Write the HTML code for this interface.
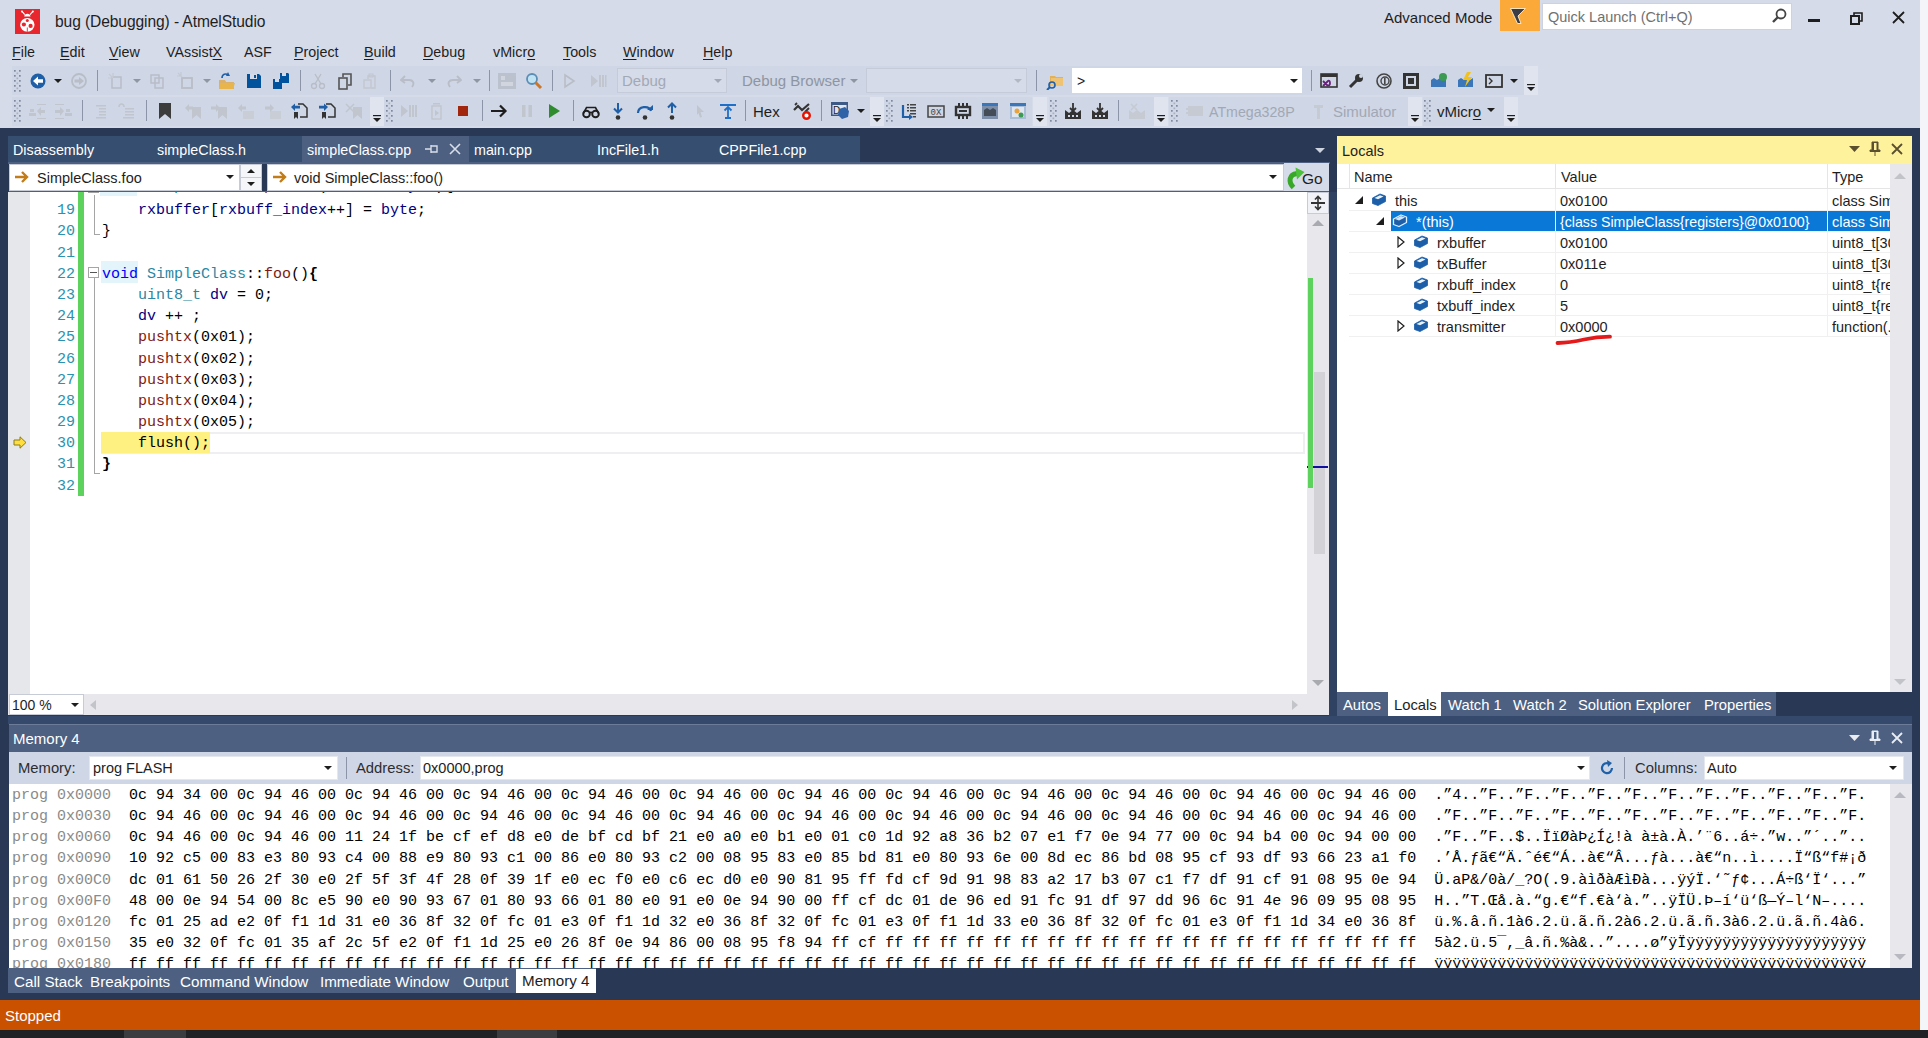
<!DOCTYPE html>
<html><head><meta charset="utf-8"><title>AtmelStudio</title>
<style>
html,body{margin:0;padding:0;width:1928px;height:1038px;overflow:hidden;background:#293955}
div{position:absolute;white-space:pre}
.S{font-family:"Liberation Sans",sans-serif}
.M{font-family:"Liberation Mono",monospace}
svg{position:absolute}
</style></head><body>
<div style="left:0px;top:0px;width:1920px;height:128px;background:#d6dbe9;"></div>
<div style="left:0px;top:128px;width:1920px;height:872px;background:#293955;"></div>
<div style="left:0px;top:1000px;width:1920px;height:30px;background:#ca5100;"></div>
<div style="left:0px;top:1030px;width:1928px;height:8px;background:#1f2125;"></div>
<div style="left:1920px;top:0px;width:8px;height:1030px;background:#f4f5f9;"></div>
<svg style="position:absolute;left:15px;top:9px;" width="25" height="25" viewBox="0 0 25 25"><rect width="25" height="25" fill="#e8262e"/><path d="M7 2.3 L9.8 5.6 M17.9 2.3 L15 5.6" stroke="#fff" stroke-width="1.2"/><circle cx="7" cy="2.4" r="1" fill="#fff"/><circle cx="17.9" cy="2.4" r="1" fill="#fff"/><path d="M9.2 7.6 A3.2 3.4 0 0 1 15.5 7.6 Z" fill="#fff"/><ellipse cx="12.3" cy="15.8" rx="7.2" ry="6.9" fill="#fff"/><circle cx="12.3" cy="11.6" r="1.5" fill="#e8262e"/><circle cx="8.9" cy="15.5" r="2.1" fill="#e8262e"/><circle cx="15.6" cy="16.9" r="2.1" fill="#e8262e"/><path d="M12.3 18.5 V22.8" stroke="#e8262e" stroke-width="0.9"/></svg>
<div class="S" style="left:55px;top:14.29px;font-size:15.6px;line-height:15.6px;color:#1e1e1e;letter-spacing:-0.1px">bug (Debugging) - AtmelStudio</div>
<div class="S" style="left:1384px;top:10.30px;font-size:15px;line-height:15px;color:#1e1e1e;">Advanced Mode</div>
<div style="left:1500px;top:0px;width:40px;height:31px;background:#fbaa3a;"></div>
<svg style="position:absolute;left:1508px;top:5px;" width="22" height="20" viewBox="0 0 22 20"><path d="M2.5 3.5 H17.4 L10 11 L13 18.5 H9.5 Z" fill="#3c3c46" stroke="#fff1cf" stroke-width="0.9" stroke-linejoin="round"/></svg>
<div style="left:1542px;top:3px;width:250px;height:27px;background:#fff;box-sizing:border-box;border:1px solid #cdd2dd"></div>
<div class="S" style="left:1548px;top:9.73px;font-size:14.5px;line-height:14.5px;color:#717171;">Quick Launch (Ctrl+Q)</div>
<svg style="position:absolute;left:1770px;top:7px;" width="18" height="18" viewBox="0 0 18 18"><circle cx="11" cy="7" r="4.5" fill="none" stroke="#444" stroke-width="1.8"/><line x1="8" y1="10" x2="3" y2="15" stroke="#444" stroke-width="2.4"/></svg>
<div style="left:1808px;top:19px;width:12px;height:3px;background:#1e1e1e;"></div>
<svg style="position:absolute;left:1849px;top:10px;" width="16" height="16" viewBox="0 0 16 16"><rect x="2" y="6" width="8" height="8" fill="none" stroke="#1e1e1e" stroke-width="2"/><path d="M5 6 V3 H13 V11 H10" fill="none" stroke="#1e1e1e" stroke-width="1.6"/></svg>
<svg style="position:absolute;left:1891px;top:10px;" width="15" height="15" viewBox="0 0 15 15"><path d="M2 2 L13 13 M13 2 L2 13" stroke="#1e1e1e" stroke-width="1.8"/></svg>
<div class="S" style="left:12px;top:44.90px;font-size:14.3px;line-height:14.3px;color:#1e1e1e;"><span style="text-decoration:underline;text-underline-offset:2px;text-decoration-thickness:1px">F</span>ile</div>
<div class="S" style="left:60px;top:44.90px;font-size:14.3px;line-height:14.3px;color:#1e1e1e;"><span style="text-decoration:underline;text-underline-offset:2px;text-decoration-thickness:1px">E</span>dit</div>
<div class="S" style="left:109px;top:44.90px;font-size:14.3px;line-height:14.3px;color:#1e1e1e;"><span style="text-decoration:underline;text-underline-offset:2px;text-decoration-thickness:1px">V</span>iew</div>
<div class="S" style="left:166px;top:44.90px;font-size:14.3px;line-height:14.3px;color:#1e1e1e;">VAssist<span style="text-decoration:underline;text-underline-offset:2px;text-decoration-thickness:1px">X</span></div>
<div class="S" style="left:244px;top:44.90px;font-size:14.3px;line-height:14.3px;color:#1e1e1e;">ASF</div>
<div class="S" style="left:294px;top:44.90px;font-size:14.3px;line-height:14.3px;color:#1e1e1e;"><span style="text-decoration:underline;text-underline-offset:2px;text-decoration-thickness:1px">P</span>roject</div>
<div class="S" style="left:364px;top:44.90px;font-size:14.3px;line-height:14.3px;color:#1e1e1e;"><span style="text-decoration:underline;text-underline-offset:2px;text-decoration-thickness:1px">B</span>uild</div>
<div class="S" style="left:423px;top:44.90px;font-size:14.3px;line-height:14.3px;color:#1e1e1e;"><span style="text-decoration:underline;text-underline-offset:2px;text-decoration-thickness:1px">D</span>ebug</div>
<div class="S" style="left:493px;top:44.90px;font-size:14.3px;line-height:14.3px;color:#1e1e1e;">vMicr<span style="text-decoration:underline;text-underline-offset:2px;text-decoration-thickness:1px">o</span></div>
<div class="S" style="left:563px;top:44.90px;font-size:14.3px;line-height:14.3px;color:#1e1e1e;"><span style="text-decoration:underline;text-underline-offset:2px;text-decoration-thickness:1px">T</span>ools</div>
<div class="S" style="left:623px;top:44.90px;font-size:14.3px;line-height:14.3px;color:#1e1e1e;"><span style="text-decoration:underline;text-underline-offset:2px;text-decoration-thickness:1px">W</span>indow</div>
<div class="S" style="left:703px;top:44.90px;font-size:14.3px;line-height:14.3px;color:#1e1e1e;"><span style="text-decoration:underline;text-underline-offset:2px;text-decoration-thickness:1px">H</span>elp</div>
<div style="left:12px;top:66px;width:1512px;height:29px;background:#cfd6e5;"></div>
<div style="left:1524px;top:66px;width:14px;height:29px;background:#dfe4ee;"></div>
<div style="left:12px;top:97px;width:358px;height:29px;background:#cfd6e5;"></div>
<div style="left:1153px;top:97px;width:1px;height:29px;background:#cfd6e5;"></div>
<div style="left:12px;top:97px;width:358px;height:29px;background:#cfd6e5;"></div>
<div style="left:384px;top:97px;width:486px;height:29px;background:#cfd6e5;"></div>
<div style="left:884px;top:97px;width:148px;height:29px;background:#cfd6e5;"></div>
<div style="left:1049px;top:97px;width:105px;height:29px;background:#cfd6e5;"></div>
<div style="left:1169px;top:97px;width:239px;height:29px;background:#cfd6e5;"></div>
<div style="left:1423px;top:97px;width:81px;height:29px;background:#cfd6e5;"></div>
<div style="left:370px;top:97px;width:14px;height:29px;background:#dfe4ee;"></div>
<svg style="position:absolute;left:372px;top:113px;" width="10" height="10" viewBox="0 0 10 10"><rect x="1" y="2" width="8" height="1.2" fill="#1e1e1e"/><path d="M1 5 H9 L5 9 Z" fill="#1e1e1e"/></svg>
<div style="left:870px;top:97px;width:14px;height:29px;background:#dfe4ee;"></div>
<svg style="position:absolute;left:872px;top:113px;" width="10" height="10" viewBox="0 0 10 10"><rect x="1" y="2" width="8" height="1.2" fill="#1e1e1e"/><path d="M1 5 H9 L5 9 Z" fill="#1e1e1e"/></svg>
<div style="left:1033px;top:97px;width:14px;height:29px;background:#dfe4ee;"></div>
<svg style="position:absolute;left:1035px;top:113px;" width="10" height="10" viewBox="0 0 10 10"><rect x="1" y="2" width="8" height="1.2" fill="#1e1e1e"/><path d="M1 5 H9 L5 9 Z" fill="#1e1e1e"/></svg>
<div style="left:1154px;top:97px;width:14px;height:29px;background:#dfe4ee;"></div>
<svg style="position:absolute;left:1156px;top:113px;" width="10" height="10" viewBox="0 0 10 10"><rect x="1" y="2" width="8" height="1.2" fill="#1e1e1e"/><path d="M1 5 H9 L5 9 Z" fill="#1e1e1e"/></svg>
<div style="left:1408px;top:97px;width:14px;height:29px;background:#dfe4ee;"></div>
<svg style="position:absolute;left:1410px;top:113px;" width="10" height="10" viewBox="0 0 10 10"><rect x="1" y="2" width="8" height="1.2" fill="#1e1e1e"/><path d="M1 5 H9 L5 9 Z" fill="#1e1e1e"/></svg>
<div style="left:1504px;top:97px;width:14px;height:29px;background:#dfe4ee;"></div>
<svg style="position:absolute;left:1506px;top:113px;" width="10" height="10" viewBox="0 0 10 10"><rect x="1" y="2" width="8" height="1.2" fill="#1e1e1e"/><path d="M1 5 H9 L5 9 Z" fill="#1e1e1e"/></svg>
<div style="left:1524px;top:66px;width:14px;height:29px;background:#dfe4ee;"></div>
<svg style="position:absolute;left:1526px;top:82px;" width="10" height="10" viewBox="0 0 10 10"><rect x="1" y="2" width="8" height="1.2" fill="#1e1e1e"/><path d="M1 5 H9 L5 9 Z" fill="#1e1e1e"/></svg>
<svg style="position:absolute;left:14px;top:70px;" width="7" height="22" viewBox="0 0 7 22"><rect x="0" y="0.0" width="1.7" height="1.7" fill="#7f899d"/><rect x="5" y="0.0" width="1.7" height="1.7" fill="#7f899d"/><rect x="2.5" y="2.5" width="1.7" height="1.7" fill="#a9b1c0"/><rect x="0" y="5.0" width="1.7" height="1.7" fill="#7f899d"/><rect x="5" y="5.0" width="1.7" height="1.7" fill="#7f899d"/><rect x="2.5" y="7.5" width="1.7" height="1.7" fill="#a9b1c0"/><rect x="0" y="10.0" width="1.7" height="1.7" fill="#7f899d"/><rect x="5" y="10.0" width="1.7" height="1.7" fill="#7f899d"/><rect x="2.5" y="12.5" width="1.7" height="1.7" fill="#a9b1c0"/><rect x="0" y="15.0" width="1.7" height="1.7" fill="#7f899d"/><rect x="5" y="15.0" width="1.7" height="1.7" fill="#7f899d"/><rect x="2.5" y="17.5" width="1.7" height="1.7" fill="#a9b1c0"/><rect x="0" y="20.0" width="1.7" height="1.7" fill="#7f899d"/><rect x="5" y="20.0" width="1.7" height="1.7" fill="#7f899d"/></svg>
<svg style="position:absolute;left:14px;top:100px;" width="7" height="22" viewBox="0 0 7 22"><rect x="0" y="0.0" width="1.7" height="1.7" fill="#7f899d"/><rect x="5" y="0.0" width="1.7" height="1.7" fill="#7f899d"/><rect x="2.5" y="2.5" width="1.7" height="1.7" fill="#a9b1c0"/><rect x="0" y="5.0" width="1.7" height="1.7" fill="#7f899d"/><rect x="5" y="5.0" width="1.7" height="1.7" fill="#7f899d"/><rect x="2.5" y="7.5" width="1.7" height="1.7" fill="#a9b1c0"/><rect x="0" y="10.0" width="1.7" height="1.7" fill="#7f899d"/><rect x="5" y="10.0" width="1.7" height="1.7" fill="#7f899d"/><rect x="2.5" y="12.5" width="1.7" height="1.7" fill="#a9b1c0"/><rect x="0" y="15.0" width="1.7" height="1.7" fill="#7f899d"/><rect x="5" y="15.0" width="1.7" height="1.7" fill="#7f899d"/><rect x="2.5" y="17.5" width="1.7" height="1.7" fill="#a9b1c0"/><rect x="0" y="20.0" width="1.7" height="1.7" fill="#7f899d"/><rect x="5" y="20.0" width="1.7" height="1.7" fill="#7f899d"/></svg>
<svg style="position:absolute;left:29px;top:72px;" width="18" height="18" viewBox="0 0 18 18"><circle cx="9" cy="9" r="7.5" fill="#1f5fa8"/><path d="M4 9 L9 4.5 V7.3 H14 V10.7 H9 V13.5 Z" fill="#fff"/></svg>
<svg style="position:absolute;left:54px;top:79px;" width="8" height="5" viewBox="0 0 8 5"><path d="M0 0 H8 L4 4 Z" fill="#1e1e1e"/></svg>
<svg style="position:absolute;left:70px;top:72px;" width="18" height="18" viewBox="0 0 18 18"><circle cx="9" cy="9" r="7" fill="none" stroke="#b8bdc7" stroke-width="1.8"/><path d="M14 9 L9 5 V7.5 H4.5 V10.5 H9 V13 Z" fill="#b8bdc7"/></svg>
<div style="left:97px;top:70px;width:1px;height:21px;background:#8c95a8;"></div>
<svg style="position:absolute;left:107px;top:72px;" width="18" height="18" viewBox="0 0 18 18"><rect x="5" y="5" width="9" height="11" fill="none" stroke="#b8bdc7" stroke-width="1.5"/><path d="M2 2 L6 6 M6 1 V5 M1 6 H5" stroke="#c5cad3" stroke-width="1.2"/></svg>
<svg style="position:absolute;left:133px;top:79px;" width="8" height="5" viewBox="0 0 8 5"><path d="M0 0 H8 L4 4 Z" fill="#8f96a4"/></svg>
<svg style="position:absolute;left:148px;top:72px;" width="18" height="18" viewBox="0 0 18 18"><rect x="3" y="3" width="8" height="8" fill="none" stroke="#b8bdc7" stroke-width="1.5"/><rect x="7" y="6" width="8" height="10" fill="none" stroke="#b8bdc7" stroke-width="1.5"/></svg>
<svg style="position:absolute;left:177px;top:72px;" width="18" height="18" viewBox="0 0 18 18"><rect x="5" y="6" width="10" height="10" fill="none" stroke="#b8bdc7" stroke-width="1.8"/><path d="M1 1 L5 5 M4 0 V4 M0 4 H4" stroke="#c5cad3" stroke-width="1.2"/></svg>
<svg style="position:absolute;left:203px;top:79px;" width="8" height="5" viewBox="0 0 8 5"><path d="M0 0 H8 L4 4 Z" fill="#8f96a4"/></svg>
<svg style="position:absolute;left:218px;top:72px;" width="18" height="18" viewBox="0 0 18 18"><path d="M1 8 H7 L8 10 H16 V17 H1 Z" fill="#dcb067"/><path d="M2 11 H17 L15 17 H1 Z" fill="#e8b54d"/><path d="M4 6 C4 2, 8 1, 10 3" fill="none" stroke="#1f5fa8" stroke-width="1.6"/><path d="M10 0 L12 4 L8 4 Z" fill="#1f5fa8"/></svg>
<svg style="position:absolute;left:245px;top:72px;" width="18" height="18" viewBox="0 0 18 18"><path d="M2 2 H14 L16 4 V16 H2 Z" fill="#00539c"/><rect x="5" y="2" width="7" height="5" fill="#d6dbe9"/><rect x="9" y="3" width="2" height="3" fill="#00539c"/><rect x="5" y="10" width="8" height="6" fill="#00539c"/></svg>
<svg style="position:absolute;left:272px;top:72px;" width="18" height="18" viewBox="0 0 18 18"><path d="M1 7 H9 L10 8 V17 H1 Z" fill="#00539c"/><rect x="3" y="7" width="4" height="3" fill="#d6dbe9"/><path d="M8 1 H16 L17 2 V11 H8 Z" fill="#00539c"/><rect x="10" y="1" width="4" height="3" fill="#d6dbe9"/></svg>
<div style="left:300px;top:70px;width:1px;height:21px;background:#8c95a8;"></div>
<svg style="position:absolute;left:309px;top:72px;" width="18" height="18" viewBox="0 0 18 18"><circle cx="5" cy="14" r="2.5" fill="none" stroke="#b8bdc7" stroke-width="1.3"/><circle cx="13" cy="14" r="2.5" fill="none" stroke="#b8bdc7" stroke-width="1.3"/><path d="M6 12 L12 2 M12 12 L6 2" stroke="#b8bdc7" stroke-width="1.3"/></svg>
<svg style="position:absolute;left:336px;top:72px;" width="18" height="18" viewBox="0 0 18 18"><rect x="3" y="6" width="8" height="11" fill="none" stroke="#555" stroke-width="1.6"/><path d="M7 5 V2 H15 V13 H12" fill="none" stroke="#555" stroke-width="1.6"/></svg>
<svg style="position:absolute;left:362px;top:72px;" width="18" height="18" viewBox="0 0 18 18"><rect x="2" y="8" width="7" height="8" fill="none" stroke="#c2c7d0" stroke-width="1.4"/><path d="M6 7 V4 H13 V16 H9" fill="none" stroke="#c2c7d0" stroke-width="1.4"/><rect x="7" y="2" width="4" height="3" fill="none" stroke="#c2c7d0"/></svg>
<div style="left:390px;top:70px;width:1px;height:21px;background:#8c95a8;"></div>
<svg style="position:absolute;left:400px;top:72px;" width="18" height="18" viewBox="0 0 18 18"><path d="M5 4 L1 8 L5 11" fill="none" stroke="#b8bdc7" stroke-width="1.8"/><path d="M2 8 H9 C13 8 15 11 12 15" fill="none" stroke="#b8bdc7" stroke-width="1.8"/></svg>
<svg style="position:absolute;left:428px;top:79px;" width="8" height="5" viewBox="0 0 8 5"><path d="M0 0 H8 L4 4 Z" fill="#8f96a4"/></svg>
<svg style="position:absolute;left:444px;top:72px;" width="18" height="18" viewBox="0 0 18 18"><path d="M13 4 L17 8 L13 11" fill="none" stroke="#b8bdc7" stroke-width="1.8"/><path d="M16 8 H9 C5 8 3 11 6 15" fill="none" stroke="#b8bdc7" stroke-width="1.8"/></svg>
<svg style="position:absolute;left:473px;top:79px;" width="8" height="5" viewBox="0 0 8 5"><path d="M0 0 H8 L4 4 Z" fill="#8f96a4"/></svg>
<div style="left:489px;top:70px;width:1px;height:21px;background:#8c95a8;"></div>
<svg style="position:absolute;left:498px;top:72px;" width="18" height="18" viewBox="0 0 18 18"><rect x="0" y="1" width="18" height="16" fill="#bcc2cd"/><rect x="3" y="4" width="4" height="4" fill="#d0d5de"/><rect x="3" y="10" width="12" height="4" fill="#d0d5de"/></svg>
<svg style="position:absolute;left:525px;top:72px;" width="18" height="18" viewBox="0 0 18 18"><circle cx="7" cy="7" r="5" fill="#bfe3f2" stroke="#5b8db5" stroke-width="1.8"/><path d="M10.5 10.5 L16 16" stroke="#c9772c" stroke-width="3"/></svg>
<div style="left:552px;top:70px;width:1px;height:21px;background:#8c95a8;"></div>
<svg style="position:absolute;left:560px;top:72px;" width="18" height="18" viewBox="0 0 18 18"><path d="M5 3 L14 9 L5 15 Z" fill="none" stroke="#b8bdc7" stroke-width="1.6"/></svg>
<svg style="position:absolute;left:589px;top:72px;" width="18" height="18" viewBox="0 0 18 18"><path d="M2 3 L9 9 L2 15 Z" fill="#c0c5ce"/><rect x="10" y="3" width="2" height="12" fill="#c0c5ce"/><rect x="13" y="3" width="2" height="12" fill="#c0c5ce"/><rect x="16" y="3" width="1.5" height="12" fill="#c0c5ce"/></svg>
<div style="left:617px;top:68px;width:110px;height:25px;background:#d6dbe9;box-sizing:border-box;border:1px solid #c5cbd8"></div>
<div class="S" style="left:622px;top:73.30px;font-size:15px;line-height:15px;color:#a2a9b6;">Debug</div>
<svg style="position:absolute;left:714px;top:79px;" width="8" height="5" viewBox="0 0 8 5"><path d="M0 0 H8 L4 4 Z" fill="#a2a9b6"/></svg>
<div class="S" style="left:742px;top:73.30px;font-size:15px;line-height:15px;color:#8d95a3;">Debug Browser</div>
<svg style="position:absolute;left:850px;top:79px;" width="8" height="5" viewBox="0 0 8 5"><path d="M0 0 H8 L4 4 Z" fill="#8d95a3"/></svg>
<div style="left:866px;top:68px;width:161px;height:25px;background:#d6dbe9;box-sizing:border-box;border:1px solid #c5cbd8"></div>
<svg style="position:absolute;left:1014px;top:79px;" width="8" height="5" viewBox="0 0 8 5"><path d="M0 0 H8 L4 4 Z" fill="#b3b9c4"/></svg>
<div style="left:1036px;top:70px;width:1px;height:21px;background:#8c95a8;"></div>
<svg style="position:absolute;left:1046px;top:72px;" width="18" height="18" viewBox="0 0 18 18"><path d="M4 4 H9 L10 5 H17 V14 H4 Z" fill="#e1b15c"/><rect x="5" y="6" width="12" height="8" fill="#eec373"/><circle cx="6" cy="13" r="3" fill="none" stroke="#1f5fa8" stroke-width="1.6"/><path d="M4 15 L1 18" stroke="#1f5fa8" stroke-width="2"/></svg>
<div style="left:1072px;top:68px;width:230px;height:25px;background:#ffffff;"></div>
<div class="S" style="left:1077px;top:74.15px;font-size:14px;line-height:14px;color:#1e1e1e;">&gt;</div>
<svg style="position:absolute;left:1290px;top:79px;" width="8" height="5" viewBox="0 0 8 5"><path d="M0 0 H8 L4 4 Z" fill="#1e1e1e"/></svg>
<div style="left:1311px;top:70px;width:1px;height:21px;background:#8c95a8;"></div>
<svg style="position:absolute;left:1320px;top:72px;" width="18" height="18" viewBox="0 0 18 18"><rect x="1" y="2" width="16" height="13" fill="none" stroke="#333" stroke-width="1.6"/><rect x="1" y="2" width="16" height="3" fill="#333"/><path d="M3 9 L8 14 M3 14 L8 9 C9 8 10 9 10 11 C10 13 9 14 8 13" fill="none" stroke="#68217a" stroke-width="1.8"/></svg>
<svg style="position:absolute;left:1347px;top:72px;" width="18" height="18" viewBox="0 0 18 18"><path d="M3 15 L10 8" stroke="#333" stroke-width="3"/><circle cx="12" cy="6" r="4" fill="#333"/><circle cx="14" cy="4" r="2" fill="#cfd6e5"/></svg>
<svg style="position:absolute;left:1375px;top:72px;" width="18" height="18" viewBox="0 0 18 18"><circle cx="9" cy="9" r="7" fill="none" stroke="#444" stroke-width="1.6"/><circle cx="10" cy="9" r="4" fill="none" stroke="#444" stroke-width="1.4"/><rect x="9" y="6" width="1.6" height="6" fill="#444"/></svg>
<svg style="position:absolute;left:1402px;top:72px;" width="18" height="18" viewBox="0 0 18 18"><rect x="1" y="1" width="16" height="16" fill="#333"/><rect x="4" y="4" width="10" height="10" fill="#cfd6e5"/><rect x="6" y="6" width="6" height="6" fill="#333"/></svg>
<svg style="position:absolute;left:1430px;top:72px;" width="18" height="18" viewBox="0 0 18 18"><path d="M1 8 L4 6 L7 8 L10 6 L13 8 L16 6 V15 H1 Z" fill="#3a76b8"/><circle cx="13" cy="5" r="4" fill="#3c9a52"/></svg>
<svg style="position:absolute;left:1457px;top:72px;" width="18" height="18" viewBox="0 0 18 18"><path d="M1 8 L4 6 L7 8 L10 6 L13 8 L16 6 V15 H1 Z" fill="#3a76b8"/><path d="M10 0 L6 8 H10 L8 15 L15 5 H11 L14 0 Z" fill="#f2c21a"/></svg>
<svg style="position:absolute;left:1485px;top:72px;" width="18" height="18" viewBox="0 0 18 18"><rect x="1" y="3" width="16" height="12" fill="none" stroke="#333" stroke-width="1.8"/><path d="M4 6 L7 9 L4 12" fill="none" stroke="#333" stroke-width="1.4"/></svg>
<svg style="position:absolute;left:1510px;top:79px;" width="8" height="5" viewBox="0 0 8 5"><path d="M0 0 H8 L4 4 Z" fill="#1e1e1e"/></svg>
<svg style="position:absolute;left:29px;top:102px;" width="18" height="18" viewBox="0 0 18 18"><rect x="1" y="7" width="4" height="3" fill="#c0c5ce"/><rect x="0" y="11" width="7" height="3" fill="#c0c5ce"/><path d="M8 9 L12 5 V8 H16 V11 H12 V14 Z" fill="#c0c5ce"/><rect x="8" y="2" width="9" height="1" fill="#c0c5ce"/><rect x="8" y="16" width="9" height="1" fill="#c0c5ce"/></svg>
<svg style="position:absolute;left:54px;top:102px;" width="18" height="18" viewBox="0 0 18 18"><rect x="12" y="7" width="4" height="3" fill="#c0c5ce"/><rect x="11" y="11" width="7" height="3" fill="#c0c5ce"/><path d="M10 9 L6 5 V8 H1 V11 H6 V14 Z" fill="#c0c5ce"/><rect x="1" y="2" width="9" height="1" fill="#c0c5ce"/><rect x="1" y="16" width="9" height="1" fill="#c0c5ce"/></svg>
<div style="left:82px;top:100px;width:1px;height:21px;background:#8c95a8;"></div>
<svg style="position:absolute;left:92px;top:102px;" width="18" height="18" viewBox="0 0 18 18"><rect x="4" y="3" width="10" height="1.5" fill="#c0c5ce"/><rect x="7" y="6" width="7" height="1.5" fill="#c0c5ce"/><rect x="7" y="9" width="7" height="1.5" fill="#c0c5ce"/><rect x="7" y="12" width="7" height="1.5" fill="#c0c5ce"/><rect x="4" y="15" width="10" height="1.5" fill="#c0c5ce"/></svg>
<svg style="position:absolute;left:118px;top:102px;" width="18" height="18" viewBox="0 0 18 18"><path d="M1 5 C1 1 6 1 6 5" fill="none" stroke="#c0c5ce" stroke-width="1.5"/><rect x="7" y="6" width="9" height="1.5" fill="#c0c5ce"/><rect x="7" y="9" width="9" height="1.5" fill="#c0c5ce"/><rect x="7" y="12" width="9" height="1.5" fill="#c0c5ce"/><rect x="5" y="15" width="11" height="1.5" fill="#c0c5ce"/></svg>
<div style="left:146px;top:100px;width:1px;height:21px;background:#8c95a8;"></div>
<svg style="position:absolute;left:156px;top:102px;" width="18" height="18" viewBox="0 0 18 18"><path d="M3 1 H15 V17 L9 12 L3 17 Z" fill="#3c3c3c"/></svg>
<svg style="position:absolute;left:184px;top:102px;" width="18" height="18" viewBox="0 0 18 18"><path d="M8 5 H17 V17 L12.5 13 L8 17 Z" fill="#c0c5ce"/><path d="M1 6 L5 2 V4.5 H9 V7.5 H5 V10 Z" fill="#c0c5ce"/></svg>
<svg style="position:absolute;left:210px;top:102px;" width="18" height="18" viewBox="0 0 18 18"><path d="M8 5 H17 V17 L12.5 13 L8 17 Z" fill="#c0c5ce"/><path d="M10 6 L6 2 V4.5 H1 V7.5 H6 V10 Z" fill="#c0c5ce"/></svg>
<svg style="position:absolute;left:237px;top:102px;" width="18" height="18" viewBox="0 0 18 18"><rect x="6" y="9" width="11" height="8" fill="#c8cdd6"/><path d="M1 6 L5 2 V4.5 H9 V7.5 H5 V10 Z" fill="#c0c5ce"/></svg>
<svg style="position:absolute;left:264px;top:102px;" width="18" height="18" viewBox="0 0 18 18"><rect x="6" y="9" width="11" height="8" fill="#c8cdd6"/><path d="M10 6 L6 2 V4.5 H1 V7.5 H6 V10 Z" fill="#c0c5ce"/></svg>
<svg style="position:absolute;left:290px;top:102px;" width="18" height="18" viewBox="0 0 18 18"><path d="M8 2 H13 L17 6 V15 H10" fill="none" stroke="#333" stroke-width="1.5"/><path d="M4 10 H8 V17 L6 15 L4 17 Z" fill="#333"/><path d="M1 5 L5 1.5 V3.8 H10 V6.5 H5 V9 Z" fill="#1f5fa8"/></svg>
<svg style="position:absolute;left:318px;top:102px;" width="18" height="18" viewBox="0 0 18 18"><path d="M8 2 H13 L17 6 V15 H10" fill="none" stroke="#333" stroke-width="1.5"/><path d="M4 10 H8 V17 L6 15 L4 17 Z" fill="#333"/><path d="M10 5 L6 1.5 V3.8 H1 V6.5 H6 V9 Z" fill="#1f5fa8"/></svg>
<svg style="position:absolute;left:345px;top:102px;" width="18" height="18" viewBox="0 0 18 18"><path d="M8 5 H17 V17 L12.5 13 L8 17 Z" fill="#c0c5ce"/><path d="M1 2 L9 10 M9 2 L1 10" stroke="#c0c5ce" stroke-width="1.5"/></svg>
<svg style="position:absolute;left:386px;top:100px;" width="7" height="22" viewBox="0 0 7 22"><rect x="0" y="0.0" width="1.7" height="1.7" fill="#7f899d"/><rect x="5" y="0.0" width="1.7" height="1.7" fill="#7f899d"/><rect x="2.5" y="2.5" width="1.7" height="1.7" fill="#a9b1c0"/><rect x="0" y="5.0" width="1.7" height="1.7" fill="#7f899d"/><rect x="5" y="5.0" width="1.7" height="1.7" fill="#7f899d"/><rect x="2.5" y="7.5" width="1.7" height="1.7" fill="#a9b1c0"/><rect x="0" y="10.0" width="1.7" height="1.7" fill="#7f899d"/><rect x="5" y="10.0" width="1.7" height="1.7" fill="#7f899d"/><rect x="2.5" y="12.5" width="1.7" height="1.7" fill="#a9b1c0"/><rect x="0" y="15.0" width="1.7" height="1.7" fill="#7f899d"/><rect x="5" y="15.0" width="1.7" height="1.7" fill="#7f899d"/><rect x="2.5" y="17.5" width="1.7" height="1.7" fill="#a9b1c0"/><rect x="0" y="20.0" width="1.7" height="1.7" fill="#7f899d"/><rect x="5" y="20.0" width="1.7" height="1.7" fill="#7f899d"/></svg>
<svg style="position:absolute;left:400px;top:102px;" width="18" height="18" viewBox="0 0 18 18"><path d="M1 3 L8 9 L1 15 Z" fill="#c0c5ce"/><rect x="9" y="3" width="2" height="12" fill="#c0c5ce"/><rect x="12" y="3" width="2" height="12" fill="#c0c5ce"/><rect x="15" y="3" width="2" height="12" fill="#c0c5ce"/></svg>
<svg style="position:absolute;left:427px;top:102px;" width="18" height="18" viewBox="0 0 18 18"><rect x="5" y="4" width="9" height="13" fill="none" stroke="#c0c5ce" stroke-width="1.4"/><rect x="6" y="1" width="7" height="1.5" fill="#c0c5ce"/><path d="M8 8 L12 11 L8 14 Z" fill="#c0c5ce"/></svg>
<svg style="position:absolute;left:454px;top:102px;" width="18" height="18" viewBox="0 0 18 18"><rect x="4" y="4" width="10" height="10" fill="#a1260d"/></svg>
<div style="left:482px;top:100px;width:1px;height:21px;background:#8c95a8;"></div>
<svg style="position:absolute;left:490px;top:102px;" width="18" height="18" viewBox="0 0 18 18"><path d="M1 9 H15 M10 3.5 L15.5 9 L10 14.5" fill="none" stroke="#1e1e1e" stroke-width="2.2"/></svg>
<svg style="position:absolute;left:518px;top:102px;" width="18" height="18" viewBox="0 0 18 18"><rect x="4" y="3" width="3.5" height="12" fill="#c0c5ce"/><rect x="10.5" y="3" width="3.5" height="12" fill="#c0c5ce"/></svg>
<svg style="position:absolute;left:545px;top:102px;" width="18" height="18" viewBox="0 0 18 18"><path d="M4 2 L15 9 L4 16 Z" fill="#2e8b2e"/></svg>
<div style="left:573px;top:100px;width:1px;height:21px;background:#8c95a8;"></div>
<svg style="position:absolute;left:582px;top:102px;" width="18" height="18" viewBox="0 0 18 18"><circle cx="4.5" cy="12" r="3.3" fill="none" stroke="#1e1e1e" stroke-width="1.9"/><circle cx="13.5" cy="12" r="3.3" fill="none" stroke="#1e1e1e" stroke-width="1.9"/><path d="M7.5 11 Q9 9.5 10.5 11 M1.3 11.5 L4.5 5.5 H13.5 L16.7 11.5" stroke="#1e1e1e" stroke-width="1.6" fill="none"/></svg>
<svg style="position:absolute;left:609px;top:102px;" width="18" height="18" viewBox="0 0 18 18"><path d="M9 1 V10 M5 6.5 L9 10.5 L13 6.5" fill="none" stroke="#1f5fa8" stroke-width="2"/><circle cx="9" cy="15.5" r="2.3" fill="#333"/></svg>
<svg style="position:absolute;left:636px;top:102px;" width="18" height="18" viewBox="0 0 18 18"><path d="M2 11 C2 4, 13 3, 15 9" fill="none" stroke="#1f5fa8" stroke-width="2.2"/><path d="M11 8 H17 V3 Z" fill="#1f5fa8"/><circle cx="9" cy="15.5" r="2.3" fill="#333"/></svg>
<svg style="position:absolute;left:663px;top:102px;" width="18" height="18" viewBox="0 0 18 18"><path d="M9 11 V2 M5 5.5 L9 1.5 L13 5.5" fill="none" stroke="#1f5fa8" stroke-width="2"/><circle cx="9" cy="15.5" r="2.3" fill="#333"/></svg>
<svg style="position:absolute;left:691px;top:102px;" width="18" height="18" viewBox="0 0 18 18"><path d="M6 3 L13 10 H9.5 L11 15 L9 15.5 L7.5 11 L6 13 Z" fill="#c0c5ce"/></svg>
<svg style="position:absolute;left:719px;top:102px;" width="18" height="18" viewBox="0 0 18 18"><rect x="1" y="2" width="16" height="2" fill="#1f6fc8"/><path d="M9 5 V16 M5.5 8.5 L9 5 L12.5 8.5 M6 16 H12" fill="none" stroke="#1f6fc8" stroke-width="1.8"/></svg>
<div style="left:745px;top:100px;width:1px;height:21px;background:#8c95a8;"></div>
<div class="S" style="left:753px;top:104.30px;font-size:15px;line-height:15px;color:#1e1e1e;">Hex</div>
<svg style="position:absolute;left:793px;top:102px;" width="18" height="18" viewBox="0 0 18 18"><path d="M1 8 L5 4 L9 8 L16 2" fill="none" stroke="#333" stroke-width="2.2"/><path d="M2 3 L4 1 M12 10 L16 6" stroke="#333" stroke-width="1.8"/><circle cx="13.5" cy="13.5" r="3.3" fill="#fff" stroke="#e51400" stroke-width="2.4"/></svg>
<div style="left:821px;top:100px;width:1px;height:21px;background:#8c95a8;"></div>
<svg style="position:absolute;left:830px;top:101px;" width="20" height="20" viewBox="0 0 20 20"><rect x="1" y="1" width="17" height="14" fill="#3d5a86"/><rect x="2.5" y="4" width="14" height="9.5" fill="#dfe6ef"/><text x="3" y="13" font-family="Liberation Sans" font-size="10" fill="#222">D</text><path d="M9 8 L15 6 L19 10 L18 16 L12 18 L8 14 Z" fill="#2f63a8"/></svg>
<svg style="position:absolute;left:857px;top:109px;" width="8" height="5" viewBox="0 0 8 5"><path d="M0 0 H8 L4 4 Z" fill="#1e1e1e"/></svg>
<svg style="position:absolute;left:886px;top:100px;" width="7" height="22" viewBox="0 0 7 22"><rect x="0" y="0.0" width="1.7" height="1.7" fill="#7f899d"/><rect x="5" y="0.0" width="1.7" height="1.7" fill="#7f899d"/><rect x="2.5" y="2.5" width="1.7" height="1.7" fill="#a9b1c0"/><rect x="0" y="5.0" width="1.7" height="1.7" fill="#7f899d"/><rect x="5" y="5.0" width="1.7" height="1.7" fill="#7f899d"/><rect x="2.5" y="7.5" width="1.7" height="1.7" fill="#a9b1c0"/><rect x="0" y="10.0" width="1.7" height="1.7" fill="#7f899d"/><rect x="5" y="10.0" width="1.7" height="1.7" fill="#7f899d"/><rect x="2.5" y="12.5" width="1.7" height="1.7" fill="#a9b1c0"/><rect x="0" y="15.0" width="1.7" height="1.7" fill="#7f899d"/><rect x="5" y="15.0" width="1.7" height="1.7" fill="#7f899d"/><rect x="2.5" y="17.5" width="1.7" height="1.7" fill="#a9b1c0"/><rect x="0" y="20.0" width="1.7" height="1.7" fill="#7f899d"/><rect x="5" y="20.0" width="1.7" height="1.7" fill="#7f899d"/></svg>
<svg style="position:absolute;left:899px;top:102px;" width="18" height="18" viewBox="0 0 18 18"><path d="M4 3 V15 H12" fill="none" stroke="#1f5fa8" stroke-width="2.2"/><path d="M10 12 L14 15 L10 18 Z" fill="#1f5fa8"/><g fill="#444"><rect x="8" y="2" width="2" height="1.5"/><rect x="11" y="2" width="6" height="1.5"/><rect x="8" y="5" width="2" height="1.5"/><rect x="11" y="5" width="6" height="1.5"/><rect x="8" y="8" width="2" height="1.5"/><rect x="11" y="8" width="6" height="1.5"/><rect x="11" y="11" width="6" height="1.5"/><rect x="14" y="14" width="3" height="1.5"/></g></svg>
<svg style="position:absolute;left:927px;top:102px;" width="18" height="18" viewBox="0 0 18 18"><rect x="1" y="4" width="16" height="11" fill="none" stroke="#444" stroke-width="1.5"/><text x="9" y="13" font-family="Liberation Mono" font-size="9" text-anchor="middle" fill="#444">0X</text></svg>
<svg style="position:absolute;left:954px;top:102px;" width="18" height="18" viewBox="0 0 18 18"><rect x="2" y="5" width="14" height="8" fill="none" stroke="#333" stroke-width="2.4"/><g fill="#333"><rect x="4" y="1" width="2" height="3"/><rect x="8" y="1" width="2" height="3"/><rect x="12" y="1" width="2" height="3"/><rect x="4" y="14" width="2" height="3"/><rect x="8" y="14" width="2" height="3"/><rect x="12" y="14" width="2" height="3"/><rect x="5" y="8" width="8" height="2"/></g></svg>
<svg style="position:absolute;left:981px;top:102px;" width="18" height="18" viewBox="0 0 18 18"><rect x="1" y="1" width="16" height="16" fill="#7d8fa8"/><rect x="1" y="1" width="16" height="3" fill="#3a76b8"/><path d="M3 8 L6 6 L9 8 L12 6 L15 8 V14 H3 Z" fill="#444c58"/></svg>
<svg style="position:absolute;left:1009px;top:102px;" width="18" height="18" viewBox="0 0 18 18"><rect x="1" y="1" width="16" height="16" fill="#a9bdd6"/><rect x="1" y="1" width="16" height="3" fill="#3a76b8"/><rect x="3" y="5" width="12" height="10" fill="#dfe6ef"/><circle cx="8" cy="9" r="2.5" fill="#e8a33c"/><circle cx="12" cy="13" r="2.5" fill="#3c9a52"/></svg>
<svg style="position:absolute;left:1050px;top:100px;" width="7" height="22" viewBox="0 0 7 22"><rect x="0" y="0.0" width="1.7" height="1.7" fill="#7f899d"/><rect x="5" y="0.0" width="1.7" height="1.7" fill="#7f899d"/><rect x="2.5" y="2.5" width="1.7" height="1.7" fill="#a9b1c0"/><rect x="0" y="5.0" width="1.7" height="1.7" fill="#7f899d"/><rect x="5" y="5.0" width="1.7" height="1.7" fill="#7f899d"/><rect x="2.5" y="7.5" width="1.7" height="1.7" fill="#a9b1c0"/><rect x="0" y="10.0" width="1.7" height="1.7" fill="#7f899d"/><rect x="5" y="10.0" width="1.7" height="1.7" fill="#7f899d"/><rect x="2.5" y="12.5" width="1.7" height="1.7" fill="#a9b1c0"/><rect x="0" y="15.0" width="1.7" height="1.7" fill="#7f899d"/><rect x="5" y="15.0" width="1.7" height="1.7" fill="#7f899d"/><rect x="2.5" y="17.5" width="1.7" height="1.7" fill="#a9b1c0"/><rect x="0" y="20.0" width="1.7" height="1.7" fill="#7f899d"/><rect x="5" y="20.0" width="1.7" height="1.7" fill="#7f899d"/></svg>
<svg style="position:absolute;left:1064px;top:102px;" width="18" height="18" viewBox="0 0 18 18"><path d="M1 8 V17 H17 V8 L13 11 L9 8 L5 11 Z" fill="#333"/><path d="M9 1 V9 M6 6 L9 9 L12 6" fill="none" stroke="#333" stroke-width="1.8"/><g fill="#cfd6e5"><rect x="4" y="13" width="2" height="2"/><rect x="8" y="13" width="2" height="2"/><rect x="12" y="13" width="2" height="2"/></g></svg>
<svg style="position:absolute;left:1091px;top:102px;" width="18" height="18" viewBox="0 0 18 18"><path d="M1 8 V17 H17 V8 L13 11 L9 8 L5 11 Z" fill="#333"/><path d="M9 1 V9 M6 6 L9 9 L12 6" fill="none" stroke="#333" stroke-width="1.8"/><g fill="#cfd6e5"><rect x="4" y="13" width="2" height="2"/><rect x="8" y="13" width="2" height="2"/><rect x="12" y="13" width="2" height="2"/></g></svg>
<div style="left:1118px;top:100px;width:1px;height:21px;background:#8c95a8;"></div>
<svg style="position:absolute;left:1128px;top:102px;" width="18" height="18" viewBox="0 0 18 18"><path d="M1 8 V17 H17 V8 L13 11 L9 8 L5 11 Z" fill="#c5cad3"/><path d="M3 2 L9 8 M9 2 L3 8" stroke="#c5cad3" stroke-width="1.5"/></svg>
<svg style="position:absolute;left:1171px;top:100px;" width="7" height="22" viewBox="0 0 7 22"><rect x="0" y="0.0" width="1.7" height="1.7" fill="#7f899d"/><rect x="5" y="0.0" width="1.7" height="1.7" fill="#7f899d"/><rect x="2.5" y="2.5" width="1.7" height="1.7" fill="#a9b1c0"/><rect x="0" y="5.0" width="1.7" height="1.7" fill="#7f899d"/><rect x="5" y="5.0" width="1.7" height="1.7" fill="#7f899d"/><rect x="2.5" y="7.5" width="1.7" height="1.7" fill="#a9b1c0"/><rect x="0" y="10.0" width="1.7" height="1.7" fill="#7f899d"/><rect x="5" y="10.0" width="1.7" height="1.7" fill="#7f899d"/><rect x="2.5" y="12.5" width="1.7" height="1.7" fill="#a9b1c0"/><rect x="0" y="15.0" width="1.7" height="1.7" fill="#7f899d"/><rect x="5" y="15.0" width="1.7" height="1.7" fill="#7f899d"/><rect x="2.5" y="17.5" width="1.7" height="1.7" fill="#a9b1c0"/><rect x="0" y="20.0" width="1.7" height="1.7" fill="#7f899d"/><rect x="5" y="20.0" width="1.7" height="1.7" fill="#7f899d"/></svg>
<svg style="position:absolute;left:1186px;top:102px;" width="18" height="18" viewBox="0 0 18 18"><rect x="2" y="4" width="15" height="10" fill="#c5cad3"/><g fill="#c5cad3"><rect x="0" y="6" width="2" height="2"/><rect x="0" y="10" width="2" height="2"/></g></svg>
<div class="S" style="left:1209px;top:104.98px;font-size:14.2px;line-height:14.2px;color:#a1a8b5;">ATmega328P</div>
<svg style="position:absolute;left:1309px;top:102px;" width="18" height="18" viewBox="0 0 18 18"><path d="M5 3 H14 V6 H11 V17 H8 V6 H5 Z" fill="#c5cad3"/></svg>
<div class="S" style="left:1333px;top:104.30px;font-size:15px;line-height:15px;color:#a1a8b5;">Simulator</div>
<svg style="position:absolute;left:1424px;top:100px;" width="7" height="22" viewBox="0 0 7 22"><rect x="0" y="0.0" width="1.7" height="1.7" fill="#7f899d"/><rect x="5" y="0.0" width="1.7" height="1.7" fill="#7f899d"/><rect x="2.5" y="2.5" width="1.7" height="1.7" fill="#a9b1c0"/><rect x="0" y="5.0" width="1.7" height="1.7" fill="#7f899d"/><rect x="5" y="5.0" width="1.7" height="1.7" fill="#7f899d"/><rect x="2.5" y="7.5" width="1.7" height="1.7" fill="#a9b1c0"/><rect x="0" y="10.0" width="1.7" height="1.7" fill="#7f899d"/><rect x="5" y="10.0" width="1.7" height="1.7" fill="#7f899d"/><rect x="2.5" y="12.5" width="1.7" height="1.7" fill="#a9b1c0"/><rect x="0" y="15.0" width="1.7" height="1.7" fill="#7f899d"/><rect x="5" y="15.0" width="1.7" height="1.7" fill="#7f899d"/><rect x="2.5" y="17.5" width="1.7" height="1.7" fill="#a9b1c0"/><rect x="0" y="20.0" width="1.7" height="1.7" fill="#7f899d"/><rect x="5" y="20.0" width="1.7" height="1.7" fill="#7f899d"/></svg>
<div class="S" style="left:1437px;top:104.30px;font-size:15px;line-height:15px;color:#1e1e1e;">vMicr<span style="text-decoration:underline;text-underline-offset:2px">o</span></div>
<svg style="position:absolute;left:1487px;top:108px;" width="8" height="5" viewBox="0 0 8 5"><path d="M0 0 H8 L4 4 Z" fill="#1e1e1e"/></svg>
<div style="left:8px;top:136px;width:852px;height:26px;background:#364e6f;"></div>
<div style="left:302px;top:136px;width:167px;height:26px;background:#4d6082;"></div>
<div class="S" style="left:13px;top:142.90px;font-size:14.3px;line-height:14.3px;color:#ffffff;">Disassembly</div>
<div class="S" style="left:157px;top:142.90px;font-size:14.3px;line-height:14.3px;color:#ffffff;">simpleClass.h</div>
<div class="S" style="left:307px;top:142.90px;font-size:14.3px;line-height:14.3px;color:#ffffff;">simpleClass.cpp</div>
<svg style="position:absolute;left:423px;top:142px;" width="16" height="14" viewBox="0 0 16 14"><path d="M2 7 H8 M8 3 V11 M8 4 H14 V10 H8" fill="none" stroke="#d8dee9" stroke-width="1.4"/></svg>
<svg style="position:absolute;left:448px;top:142px;" width="14" height="14" viewBox="0 0 14 14"><path d="M2 2 L12 12 M12 2 L2 12" stroke="#d8dee9" stroke-width="1.6"/></svg>
<div class="S" style="left:474px;top:142.90px;font-size:14.3px;line-height:14.3px;color:#ffffff;">main.cpp</div>
<div class="S" style="left:597px;top:142.90px;font-size:14.3px;line-height:14.3px;color:#ffffff;">IncFile1.h</div>
<div class="S" style="left:719px;top:142.90px;font-size:14.3px;line-height:14.3px;color:#ffffff;">CPPFile1.cpp</div>
<svg style="position:absolute;left:1315px;top:148px;" width="10" height="6" viewBox="0 0 10 6"><path d="M0 0 H10 L5 5 Z" fill="#ced4df"/></svg>
<div style="left:8px;top:162px;width:1322px;height:2px;background:#4d6082;"></div>
<div style="left:9px;top:164px;width:1320px;height:27px;background:#ffffff;"></div>
<div style="left:9px;top:190px;width:1320px;height:2px;background:#4d6082;"></div>
<div style="left:9px;top:164px;width:231px;height:27px;background:#ffffff;box-sizing:border-box;border:1px solid #c6cbd6"></div>
<svg style="position:absolute;left:14px;top:170px;" width="18" height="14" viewBox="0 0 18 14"><path d="M1 7 H13 M8 2 L13 7 L8 12" fill="none" stroke="#c27d1a" stroke-width="2.4"/></svg>
<div class="S" style="left:37px;top:170.73px;font-size:14.5px;line-height:14.5px;color:#1e1e1e;">SimpleClass.foo</div>
<svg style="position:absolute;left:226px;top:175px;" width="8" height="5" viewBox="0 0 8 5"><path d="M0 0 H8 L4 4 Z" fill="#1e1e1e"/></svg>
<div style="left:240px;top:164px;width:22px;height:27px;background:#f5f6f9;box-sizing:border-box;border:1px solid #c6cbd6"></div>
<div style="left:241px;top:177px;width:20px;height:1px;background:#c6cbd6;"></div>
<svg style="position:absolute;left:247px;top:169px;" width="8" height="5" viewBox="0 0 8 5"><path d="M0 4 H8 L4 0 Z" fill="#1e1e1e"/></svg>
<svg style="position:absolute;left:247px;top:182px;" width="8" height="5" viewBox="0 0 8 5"><path d="M0 0 H8 L4 4 Z" fill="#1e1e1e"/></svg>
<div style="left:262px;top:164px;width:5px;height:27px;background:#293955;"></div>
<div style="left:267px;top:164px;width:1017px;height:27px;background:#ffffff;box-sizing:border-box;border:1px solid #c6cbd6"></div>
<svg style="position:absolute;left:272px;top:170px;" width="18" height="14" viewBox="0 0 18 14"><path d="M1 7 H13 M8 2 L13 7 L8 12" fill="none" stroke="#c27d1a" stroke-width="2.4"/></svg>
<div class="S" style="left:294px;top:170.73px;font-size:14.5px;line-height:14.5px;color:#1e1e1e;">void SimpleClass::foo()</div>
<svg style="position:absolute;left:1269px;top:175px;" width="8" height="5" viewBox="0 0 8 5"><path d="M0 0 H8 L4 4 Z" fill="#1e1e1e"/></svg>
<div style="left:1284px;top:163px;width:45px;height:28px;background:#d6dbe9;"></div>
<svg style="position:absolute;left:1285px;top:165px;" width="22" height="26" viewBox="0 0 22 26"><path d="M8.5 22.5 C3 17, 4 9.5, 12 8.5" fill="none" stroke="#38a828" stroke-width="5"/><path d="M10.5 2.5 L19.5 7 L12 14.5 Z" fill="#4cc23a"/></svg>
<div class="S" style="left:1302px;top:170.88px;font-size:15.5px;line-height:15.5px;color:#1e1e1e;">Go</div>
<div style="left:1329px;top:192px;width:8px;height:524px;background:#2f4262;"></div>
<div style="left:8px;top:192px;width:1321px;height:502px;background:#ffffff;"></div>
<div style="left:8px;top:192px;width:22px;height:502px;background:#e6e7eb;"></div>
<div style="left:78px;top:192px;width:6px;height:304px;background:#5dd35d;"></div>
<div style="left:1307px;top:192px;width:22px;height:502px;background:#e8e8ec;"></div>
<div style="left:1307px;top:192px;width:22px;height:22px;background:#f0f2f7;box-sizing:border-box;border:1px solid #c6cbd6"></div>
<svg style="position:absolute;left:1310px;top:195px;" width="16" height="16" viewBox="0 0 16 16"><path d="M1 8 H15 M8 2 V14 M5 4.5 L8 1.5 L11 4.5 M5 11.5 L8 14.5 L11 11.5" fill="none" stroke="#333" stroke-width="1.6"/><rect x="1" y="7" width="14" height="2" fill="#333"/></svg>
<svg style="position:absolute;left:1311px;top:219px;" width="14" height="8" viewBox="0 0 14 8"><path d="M1 7 H13 L7 1 Z" fill="#a8aab0"/></svg>
<svg style="position:absolute;left:1311px;top:679px;" width="14" height="8" viewBox="0 0 14 8"><path d="M1 1 H13 L7 7 Z" fill="#a8aab0"/></svg>
<div style="left:1314px;top:372px;width:11px;height:182px;background:#d2d2d7;"></div>
<div style="left:1307px;top:466px;width:21px;height:2px;background:#1010a0;"></div>
<div style="left:1308px;top:278px;width:5px;height:210px;background:#5dd35d;"></div>
<div style="left:8px;top:694px;width:1321px;height:21px;background:#e8e8ec;"></div>
<div style="left:9px;top:694px;width:75px;height:21px;background:#ffffff;box-sizing:border-box;border:1px solid #c6cbd6"></div>
<div class="S" style="left:12px;top:698.15px;font-size:14px;line-height:14px;color:#1e1e1e;">100 %</div>
<svg style="position:absolute;left:71px;top:703px;" width="8" height="5" viewBox="0 0 8 5"><path d="M0 0 H8 L4 4 Z" fill="#1e1e1e"/></svg>
<svg style="position:absolute;left:89px;top:699px;" width="8" height="12" viewBox="0 0 8 12"><path d="M7 1 V11 L1 6 Z" fill="#c2c4ca"/></svg>
<svg style="position:absolute;left:1291px;top:699px;" width="8" height="12" viewBox="0 0 8 12"><path d="M1 1 V11 L7 6 Z" fill="#c2c4ca"/></svg>
<div style="left:9px;top:192px;width:1298px;height:502px;overflow:hidden">
<div style="left:92px;top:240px;width:1204px;height:22px;background:transparent;box-sizing:border-box;border:2px solid #efeff1"></div>
<div style="left:92px;top:240px;width:109px;height:21px;background:#fff181;"></div>
<div style="left:92px;top:69px;width:37px;height:22px;background:#e3f4fb;"></div>
<div style="left:91px;top:-4px;width:37px;height:8px;background:#e3f4fb;"></div>
<div style="left:79px;top:-6px;width:11px;height:7px;background:transparent;box-sizing:border-box;border:1px solid #a5a5a5"></div>
<div style="left:85px;top:3px;width:1px;height:40px;background:#a5a5a5;"></div>
<div style="left:85px;top:42px;width:6px;height:1px;background:#a5a5a5;"></div>
<div style="left:79px;top:75px;width:11px;height:11px;background:#ffffff;box-sizing:border-box;border:1px solid #a5a5a5"></div>
<div style="left:81px;top:80px;width:7px;height:1px;background:#555;"></div>
<div style="left:85px;top:86px;width:1px;height:196px;background:#a5a5a5;"></div>
<div style="left:85px;top:281px;width:6px;height:1px;background:#a5a5a5;"></div>
<div class="M" style="left:93px;top:-13.00px;font-size:15px;line-height:15px;color:#000000;"><span style="color:#0000ff">void </span><span style="color:#2a86a2">SimpleClass</span><span style="color:#000000">::</span><span style="color:#7e1a12">pushrx</span><span style="color:#000000">(</span><span style="color:#2a86a2">uint8_t </span><span style="color:#000080">byte</span><span style="color:#000000">){</span></div>
<div class="M" style="left:48px;top:11.30px;font-size:15px;line-height:15px;color:#2b91af;">19</div>
<div class="M" style="left:93px;top:11.30px;font-size:15px;line-height:15px;color:#000000;"><span style="color:#000000">    </span><span style="color:#000080">rxbuffer</span><span style="color:#000000">[</span><span style="color:#000080">rxbuff_index</span><span style="color:#000000">++] = </span><span style="color:#000080">byte</span><span style="color:#000000">;</span></div>
<div class="M" style="left:48px;top:32.48px;font-size:15px;line-height:15px;color:#2b91af;">20</div>
<div class="M" style="left:93px;top:32.48px;font-size:15px;line-height:15px;color:#000000;"><span style="color:#000000">}</span></div>
<div class="M" style="left:48px;top:53.66px;font-size:15px;line-height:15px;color:#2b91af;">21</div>
<div class="M" style="left:48px;top:74.84px;font-size:15px;line-height:15px;color:#2b91af;">22</div>
<div class="M" style="left:93px;top:74.84px;font-size:15px;line-height:15px;color:#000000;"><span style="color:#0000ff">void </span><span style="color:#2a86a2">SimpleClass</span><span style="color:#000000">::</span><span style="color:#7e1a12">foo</span><span style="color:#000000">()</span><b>{</b></div>
<div class="M" style="left:48px;top:96.02px;font-size:15px;line-height:15px;color:#2b91af;">23</div>
<div class="M" style="left:93px;top:96.02px;font-size:15px;line-height:15px;color:#000000;"><span style="color:#000000">    </span><span style="color:#2a86a2">uint8_t </span><span style="color:#000080">dv</span><span style="color:#000000"> = 0;</span></div>
<div class="M" style="left:48px;top:117.20px;font-size:15px;line-height:15px;color:#2b91af;">24</div>
<div class="M" style="left:93px;top:117.20px;font-size:15px;line-height:15px;color:#000000;"><span style="color:#000000">    </span><span style="color:#000080">dv</span><span style="color:#000000"> ++ ;</span></div>
<div class="M" style="left:48px;top:138.38px;font-size:15px;line-height:15px;color:#2b91af;">25</div>
<div class="M" style="left:93px;top:138.38px;font-size:15px;line-height:15px;color:#000000;"><span style="color:#000000">    </span><span style="color:#7e1a12">pushtx</span><span style="color:#000000">(0x01);</span></div>
<div class="M" style="left:48px;top:159.56px;font-size:15px;line-height:15px;color:#2b91af;">26</div>
<div class="M" style="left:93px;top:159.56px;font-size:15px;line-height:15px;color:#000000;"><span style="color:#000000">    </span><span style="color:#7e1a12">pushtx</span><span style="color:#000000">(0x02);</span></div>
<div class="M" style="left:48px;top:180.74px;font-size:15px;line-height:15px;color:#2b91af;">27</div>
<div class="M" style="left:93px;top:180.74px;font-size:15px;line-height:15px;color:#000000;"><span style="color:#000000">    </span><span style="color:#7e1a12">pushtx</span><span style="color:#000000">(0x03);</span></div>
<div class="M" style="left:48px;top:201.92px;font-size:15px;line-height:15px;color:#2b91af;">28</div>
<div class="M" style="left:93px;top:201.92px;font-size:15px;line-height:15px;color:#000000;"><span style="color:#000000">    </span><span style="color:#7e1a12">pushtx</span><span style="color:#000000">(0x04);</span></div>
<div class="M" style="left:48px;top:223.10px;font-size:15px;line-height:15px;color:#2b91af;">29</div>
<div class="M" style="left:93px;top:223.10px;font-size:15px;line-height:15px;color:#000000;"><span style="color:#000000">    </span><span style="color:#7e1a12">pushtx</span><span style="color:#000000">(0x05);</span></div>
<div class="M" style="left:48px;top:244.28px;font-size:15px;line-height:15px;color:#2b91af;">30</div>
<div class="M" style="left:93px;top:244.28px;font-size:15px;line-height:15px;color:#000000;"><span style="color:#000000">    </span><span style="color:#000000">flush</span><span style="color:#000000">();</span></div>
<div class="M" style="left:48px;top:265.46px;font-size:15px;line-height:15px;color:#2b91af;">31</div>
<div class="M" style="left:93px;top:265.46px;font-size:15px;line-height:15px;color:#000000;"><b>}</b></div>
<div class="M" style="left:48px;top:286.64px;font-size:15px;line-height:15px;color:#2b91af;">32</div>
<svg style="position:absolute;left:4px;top:244px" width="15" height="14" viewBox="0 0 15 14"><path d="M1 4 H7 V0.8 L13 6.5 L7 12.2 V9 H1 Z" fill="#ffdf3f" stroke="#8a7a20" stroke-width="1"/></svg>
</div>
<div style="left:1337px;top:136px;width:575px;height:28px;background:#fff29d;"></div>
<div class="S" style="left:1342px;top:143.73px;font-size:14.5px;line-height:14.5px;color:#1e1e1e;">Locals</div>
<svg style="position:absolute;left:1849px;top:145px;" width="12" height="8" viewBox="0 0 12 8"><path d="M0 1 H11 L5.5 7 Z" fill="#5a5030"/></svg>
<svg style="position:absolute;left:1869px;top:141px;" width="12" height="16" viewBox="0 0 12 16"><path d="M3 1 H9 V9 H11 V10.5 H1 V9 H3 Z M6 10.5 V15" fill="#5a5030" stroke="#5a5030" stroke-width="1"/><rect x="5" y="2" width="2.5" height="7" fill="#fff29d"/></svg>
<svg style="position:absolute;left:1890px;top:142px;" width="14" height="14" viewBox="0 0 14 14"><path d="M2 2 L12 12 M12 2 L2 12" stroke="#5a5030" stroke-width="1.8"/></svg>
<div style="left:1337px;top:164px;width:575px;height:528px;background:#ffffff;"></div>
<div style="left:1349px;top:164px;width:1px;height:25px;background:#e5e5e5;"></div>
<div style="left:1555px;top:164px;width:1px;height:25px;background:#e5e5e5;"></div>
<div style="left:1827px;top:164px;width:1px;height:25px;background:#e5e5e5;"></div>
<div style="left:1337px;top:188px;width:553px;height:1px;background:#e5e5e5;"></div>
<div class="S" style="left:1354px;top:169.73px;font-size:14.5px;line-height:14.5px;color:#1e1e1e;">Name</div>
<div class="S" style="left:1561px;top:169.73px;font-size:14.5px;line-height:14.5px;color:#1e1e1e;">Value</div>
<div class="S" style="left:1832px;top:169.73px;font-size:14.5px;line-height:14.5px;color:#1e1e1e;">Type</div>
<div style="left:1890px;top:164px;width:22px;height:528px;background:#e8e8ec;"></div>
<svg style="position:absolute;left:1893px;top:172px;" width="14" height="8" viewBox="0 0 14 8"><path d="M1 7 H13 L7 1 Z" fill="#c2c3c9"/></svg>
<svg style="position:absolute;left:1893px;top:678px;" width="14" height="8" viewBox="0 0 14 8"><path d="M1 1 H13 L7 7 Z" fill="#c2c3c9"/></svg>
<div style="left:1391px;top:211px;width:499px;height:21px;background:#0a78d6;"></div>
<div style="left:1349px;top:210px;width:541px;height:1px;background:#f0f0f0;"></div>
<div style="left:1349px;top:231px;width:541px;height:1px;background:#f0f0f0;"></div>
<div style="left:1349px;top:252px;width:541px;height:1px;background:#f0f0f0;"></div>
<div style="left:1349px;top:273px;width:541px;height:1px;background:#f0f0f0;"></div>
<div style="left:1349px;top:294px;width:541px;height:1px;background:#f0f0f0;"></div>
<div style="left:1349px;top:315px;width:541px;height:1px;background:#f0f0f0;"></div>
<div style="left:1349px;top:336px;width:541px;height:1px;background:#f0f0f0;"></div>
<div style="left:1555px;top:189px;width:1px;height:147px;background:#f0f0f0;"></div>
<div style="left:1827px;top:189px;width:1px;height:147px;background:#f0f0f0;"></div>
<svg style="position:absolute;left:1354px;top:195px;" width="10" height="10" viewBox="0 0 10 10"><path d="M9 1 V9 H1 Z" fill="#1e1e1e"/></svg>
<svg style="position:absolute;left:1371px;top:192px;" width="16" height="16" viewBox="0 0 16 16"><path d="M1.5 6 L9 2 L14.5 4 V9.5 L7 13.5 L1.5 11.5 Z" fill="#1c5ea8" stroke="#1c5ea8" stroke-width="0.8" stroke-linejoin="round"/><path d="M3.5 6 L9 3.2 L12.5 4.5 L7 7.3 Z" fill="#e8f3fc"/></svg>
<div class="S" style="left:1395px;top:194.23px;font-size:14.5px;line-height:14.5px;color:#1e1e1e;">this</div>
<div class="S" style="left:1560px;top:194.23px;font-size:14.5px;line-height:14.5px;color:#1e1e1e;">0x0100</div>
<div style="left:1832px;top:189.5px;width:58px;height:20px;overflow:hidden"><div class="S" style="left:0;top:4.73px;font-size:14.5px;line-height:14.5px;color:#1e1e1e">class Sim</div></div>
<svg style="position:absolute;left:1375px;top:216px;" width="10" height="10" viewBox="0 0 10 10"><path d="M9 1 V9 H1 Z" fill="#1e1e1e"/></svg>
<svg style="position:absolute;left:1392px;top:213px;" width="16" height="16" viewBox="0 0 16 16"><path d="M1.5 6 L9 2 L14.5 4 V9.5 L7 13.5 L1.5 11.5 Z" fill="#1f5fa8" stroke="#dff0ff" stroke-width="1.3" stroke-linejoin="round"/><path d="M3 6 L9 3 L13 4.5 L7 7.5 Z" fill="#cfe6fa"/></svg>
<div class="S" style="left:1416px;top:215.23px;font-size:14.5px;line-height:14.5px;color:#ffffff;">*(this)</div>
<div class="S" style="left:1560px;top:215.48px;font-size:14.2px;line-height:14.2px;color:#ffffff;">{class SimpleClass{registers}@0x0100}</div>
<div style="left:1832px;top:210.5px;width:58px;height:20px;overflow:hidden"><div class="S" style="left:0;top:4.73px;font-size:14.5px;line-height:14.5px;color:#ffffff">class Sim</div></div>
<svg style="position:absolute;left:1396px;top:236px;" width="10" height="12" viewBox="0 0 10 12"><path d="M2 1 L8 6 L2 11 Z" fill="none" stroke="#1e1e1e" stroke-width="1.2"/></svg>
<svg style="position:absolute;left:1413px;top:234px;" width="16" height="16" viewBox="0 0 16 16"><path d="M1.5 6 L9 2 L14.5 4 V9.5 L7 13.5 L1.5 11.5 Z" fill="#1c5ea8" stroke="#1c5ea8" stroke-width="0.8" stroke-linejoin="round"/><path d="M3.5 6 L9 3.2 L12.5 4.5 L7 7.3 Z" fill="#e8f3fc"/></svg>
<div class="S" style="left:1437px;top:236.23px;font-size:14.5px;line-height:14.5px;color:#1e1e1e;">rxbuffer</div>
<div class="S" style="left:1560px;top:236.23px;font-size:14.5px;line-height:14.5px;color:#1e1e1e;">0x0100</div>
<div style="left:1832px;top:231.5px;width:58px;height:20px;overflow:hidden"><div class="S" style="left:0;top:4.73px;font-size:14.5px;line-height:14.5px;color:#1e1e1e">uint8_t[30]</div></div>
<svg style="position:absolute;left:1396px;top:257px;" width="10" height="12" viewBox="0 0 10 12"><path d="M2 1 L8 6 L2 11 Z" fill="none" stroke="#1e1e1e" stroke-width="1.2"/></svg>
<svg style="position:absolute;left:1413px;top:255px;" width="16" height="16" viewBox="0 0 16 16"><path d="M1.5 6 L9 2 L14.5 4 V9.5 L7 13.5 L1.5 11.5 Z" fill="#1c5ea8" stroke="#1c5ea8" stroke-width="0.8" stroke-linejoin="round"/><path d="M3.5 6 L9 3.2 L12.5 4.5 L7 7.3 Z" fill="#e8f3fc"/></svg>
<div class="S" style="left:1437px;top:257.23px;font-size:14.5px;line-height:14.5px;color:#1e1e1e;">txBuffer</div>
<div class="S" style="left:1560px;top:257.23px;font-size:14.5px;line-height:14.5px;color:#1e1e1e;">0x011e</div>
<div style="left:1832px;top:252.5px;width:58px;height:20px;overflow:hidden"><div class="S" style="left:0;top:4.73px;font-size:14.5px;line-height:14.5px;color:#1e1e1e">uint8_t[30]</div></div>
<svg style="position:absolute;left:1413px;top:276px;" width="16" height="16" viewBox="0 0 16 16"><path d="M1.5 6 L9 2 L14.5 4 V9.5 L7 13.5 L1.5 11.5 Z" fill="#1c5ea8" stroke="#1c5ea8" stroke-width="0.8" stroke-linejoin="round"/><path d="M3.5 6 L9 3.2 L12.5 4.5 L7 7.3 Z" fill="#e8f3fc"/></svg>
<div class="S" style="left:1437px;top:278.23px;font-size:14.5px;line-height:14.5px;color:#1e1e1e;">rxbuff_index</div>
<div class="S" style="left:1560px;top:278.23px;font-size:14.5px;line-height:14.5px;color:#1e1e1e;">0</div>
<div style="left:1832px;top:273.5px;width:58px;height:20px;overflow:hidden"><div class="S" style="left:0;top:4.73px;font-size:14.5px;line-height:14.5px;color:#1e1e1e">uint8_t{registers}</div></div>
<svg style="position:absolute;left:1413px;top:297px;" width="16" height="16" viewBox="0 0 16 16"><path d="M1.5 6 L9 2 L14.5 4 V9.5 L7 13.5 L1.5 11.5 Z" fill="#1c5ea8" stroke="#1c5ea8" stroke-width="0.8" stroke-linejoin="round"/><path d="M3.5 6 L9 3.2 L12.5 4.5 L7 7.3 Z" fill="#e8f3fc"/></svg>
<div class="S" style="left:1437px;top:299.23px;font-size:14.5px;line-height:14.5px;color:#1e1e1e;">txbuff_index</div>
<div class="S" style="left:1560px;top:299.23px;font-size:14.5px;line-height:14.5px;color:#1e1e1e;">5</div>
<div style="left:1832px;top:294.5px;width:58px;height:20px;overflow:hidden"><div class="S" style="left:0;top:4.73px;font-size:14.5px;line-height:14.5px;color:#1e1e1e">uint8_t{registers}</div></div>
<svg style="position:absolute;left:1396px;top:320px;" width="10" height="12" viewBox="0 0 10 12"><path d="M2 1 L8 6 L2 11 Z" fill="none" stroke="#1e1e1e" stroke-width="1.2"/></svg>
<svg style="position:absolute;left:1413px;top:318px;" width="16" height="16" viewBox="0 0 16 16"><path d="M1.5 6 L9 2 L14.5 4 V9.5 L7 13.5 L1.5 11.5 Z" fill="#1c5ea8" stroke="#1c5ea8" stroke-width="0.8" stroke-linejoin="round"/><path d="M3.5 6 L9 3.2 L12.5 4.5 L7 7.3 Z" fill="#e8f3fc"/></svg>
<div class="S" style="left:1437px;top:320.23px;font-size:14.5px;line-height:14.5px;color:#1e1e1e;">transmitter</div>
<div class="S" style="left:1560px;top:320.23px;font-size:14.5px;line-height:14.5px;color:#1e1e1e;">0x0000</div>
<div style="left:1832px;top:315.5px;width:58px;height:20px;overflow:hidden"><div class="S" style="left:0;top:4.73px;font-size:14.5px;line-height:14.5px;color:#1e1e1e">function(...)</div></div>
<svg style="position:absolute;left:1553px;top:331px;" width="62" height="16" viewBox="0 0 62 16"><path d="M4.5 12 C12 11.8, 22 10.5, 31 8.5 C40 6.5, 49 5.7, 57 5.7" fill="none" stroke="#e31b1b" stroke-width="3.8" stroke-linecap="round"/></svg>
<div style="left:1337px;top:692px;width:439px;height:24px;background:#4d6082;"></div>
<div style="left:1388px;top:692px;width:53px;height:24px;background:#ffffff;"></div>
<div class="S" style="left:1343px;top:697.97px;font-size:14.8px;line-height:14.8px;color:#fff;">Autos</div>
<div class="S" style="left:1394px;top:697.97px;font-size:14.8px;line-height:14.8px;color:#1e1e1e;">Locals</div>
<div class="S" style="left:1448px;top:697.97px;font-size:14.8px;line-height:14.8px;color:#fff;">Watch 1</div>
<div class="S" style="left:1513px;top:697.97px;font-size:14.8px;line-height:14.8px;color:#fff;">Watch 2</div>
<div class="S" style="left:1578px;top:697.97px;font-size:14.8px;line-height:14.8px;color:#fff;">Solution Explorer</div>
<div class="S" style="left:1704px;top:697.97px;font-size:14.8px;line-height:14.8px;color:#fff;">Properties</div>
<div style="left:8px;top:716px;width:1904px;height:8px;background:#34496b;"></div>
<div style="left:9px;top:724px;width:1903px;height:28px;background:#4d6082;"></div>
<div style="left:9px;top:724px;width:1903px;height:1px;background:#6b7b98;"></div>
<div class="S" style="left:13px;top:731.30px;font-size:15px;line-height:15px;color:#ffffff;">Memory 4</div>
<svg style="position:absolute;left:1849px;top:734px;" width="12" height="8" viewBox="0 0 12 8"><path d="M0 1 H11 L5.5 7 Z" fill="#e9ecf2"/></svg>
<svg style="position:absolute;left:1869px;top:730px;" width="12" height="16" viewBox="0 0 12 16"><path d="M3 1 H9 V9 H11 V10.5 H1 V9 H3 Z M6 10.5 V15" fill="#e9ecf2" stroke="#e9ecf2" stroke-width="1"/><rect x="5" y="2" width="2.5" height="7" fill="#4d6082"/></svg>
<svg style="position:absolute;left:1890px;top:731px;" width="14" height="14" viewBox="0 0 14 14"><path d="M2 2 L12 12 M12 2 L2 12" stroke="#e9ecf2" stroke-width="1.8"/></svg>
<div style="left:9px;top:752px;width:1903px;height:32px;background:#cfd6e5;"></div>
<div class="S" style="left:18px;top:761.47px;font-size:14.8px;line-height:14.8px;color:#2d2d30;">Memory:</div>
<div style="left:89px;top:756px;width:249px;height:24px;background:#ffffff;box-sizing:border-box;border:1px solid #e4e7ee"></div>
<div class="S" style="left:93px;top:760.73px;font-size:14.5px;line-height:14.5px;color:#1e1e1e;">prog FLASH</div>
<svg style="position:absolute;left:324px;top:766px;" width="8" height="5" viewBox="0 0 8 5"><path d="M0 0 H8 L4 4 Z" fill="#1e1e1e"/></svg>
<div style="left:346px;top:757px;width:1px;height:22px;background:#8c95a8;"></div>
<div class="S" style="left:356px;top:761.47px;font-size:14.8px;line-height:14.8px;color:#2d2d30;">Address:</div>
<div style="left:420px;top:756px;width:1170px;height:24px;background:#ffffff;box-sizing:border-box;border:1px solid #e4e7ee"></div>
<div class="S" style="left:423px;top:760.73px;font-size:14.5px;line-height:14.5px;color:#1e1e1e;">0x0000,prog</div>
<svg style="position:absolute;left:1577px;top:766px;" width="8" height="5" viewBox="0 0 8 5"><path d="M0 0 H8 L4 4 Z" fill="#1e1e1e"/></svg>
<svg style="position:absolute;left:1598px;top:759px;" width="18" height="18" viewBox="0 0 18 18"><path d="M14 9 A5 5 0 1 1 11 4.5" fill="none" stroke="#1f5fa8" stroke-width="2.2"/><path d="M9 1 L14 4 L10 8 Z" fill="#1f5fa8"/></svg>
<div style="left:1624px;top:757px;width:1px;height:22px;background:#8c95a8;"></div>
<div class="S" style="left:1635px;top:761.47px;font-size:14.8px;line-height:14.8px;color:#2d2d30;">Columns:</div>
<div style="left:1704px;top:756px;width:200px;height:24px;background:#ffffff;box-sizing:border-box;border:1px solid #e4e7ee"></div>
<div class="S" style="left:1707px;top:760.73px;font-size:14.5px;line-height:14.5px;color:#1e1e1e;">Auto</div>
<svg style="position:absolute;left:1889px;top:766px;" width="8" height="5" viewBox="0 0 8 5"><path d="M0 0 H8 L4 4 Z" fill="#1e1e1e"/></svg>
<div style="left:9px;top:784px;width:1903px;height:184px;background:#ffffff;"></div>
<div style="left:1890px;top:784px;width:22px;height:184px;background:#e8e8ec;"></div>
<svg style="position:absolute;left:1893px;top:791px;" width="14" height="8" viewBox="0 0 14 8"><path d="M1 7 H13 L7 1 Z" fill="#b8b9c0"/></svg>
<svg style="position:absolute;left:1893px;top:953px;" width="14" height="8" viewBox="0 0 14 8"><path d="M1 1 H13 L7 7 Z" fill="#b8b9c0"/></svg>
<div style="left:9px;top:784px;width:1881px;height:184px;overflow:hidden">
<div class="M" style="left:3px;top:3.90px;font-size:15px;line-height:15px;color:#000"><span style="color:#8a8a8a">prog 0x0000</span>  0c 94 34 00 0c 94 46 00 0c 94 46 00 0c 94 46 00 0c 94 46 00 0c 94 46 00 0c 94 46 00 0c 94 46 00 0c 94 46 00 0c 94 46 00 0c 94 46 00 0c 94 46 00  .”4..”F..”F..”F..”F..”F..”F..”F..”F..”F..”F..”F.</div>
<div class="M" style="left:3px;top:25.08px;font-size:15px;line-height:15px;color:#000"><span style="color:#8a8a8a">prog 0x0030</span>  0c 94 46 00 0c 94 46 00 0c 94 46 00 0c 94 46 00 0c 94 46 00 0c 94 46 00 0c 94 46 00 0c 94 46 00 0c 94 46 00 0c 94 46 00 0c 94 46 00 0c 94 46 00  .”F..”F..”F..”F..”F..”F..”F..”F..”F..”F..”F..”F.</div>
<div class="M" style="left:3px;top:46.26px;font-size:15px;line-height:15px;color:#000"><span style="color:#8a8a8a">prog 0x0060</span>  0c 94 46 00 0c 94 46 00 11 24 1f be cf ef d8 e0 de bf cd bf 21 e0 a0 e0 b1 e0 01 c0 1d 92 a8 36 b2 07 e1 f7 0e 94 77 00 0c 94 b4 00 0c 94 00 00  .”F..”F..$..ÏïØàÞ¿Í¿!à à±à.À.’¨6..á÷.”w..”´..”..</div>
<div class="M" style="left:3px;top:67.44px;font-size:15px;line-height:15px;color:#000"><span style="color:#8a8a8a">prog 0x0090</span>  10 92 c5 00 83 e3 80 93 c4 00 88 e9 80 93 c1 00 86 e0 80 93 c2 00 08 95 83 e0 85 bd 81 e0 80 93 6e 00 8d ec 86 bd 08 95 cf 93 df 93 66 23 a1 f0  .’Å.ƒã€“Ä.ˆé€“Á..à€“Â...ƒà...à€“n..ì....Ï“ß“f#¡ð</div>
<div class="M" style="left:3px;top:88.62px;font-size:15px;line-height:15px;color:#000"><span style="color:#8a8a8a">prog 0x00C0</span>  dc 01 61 50 26 2f 30 e0 2f 5f 3f 4f 28 0f 39 1f e0 ec f0 e0 c6 ec d0 e0 90 81 95 ff fd cf 9d 91 98 83 a2 17 b3 07 c1 f7 df 91 cf 91 08 95 0e 94  Ü.aP&amp;/0à/_?O(.9.àìðàÆìÐà...ÿýÏ.‘˜ƒ¢...Á÷ß‘Ï‘...”</div>
<div class="M" style="left:3px;top:109.80px;font-size:15px;line-height:15px;color:#000"><span style="color:#8a8a8a">prog 0x00F0</span>  48 00 0e 94 54 00 8c e5 90 e0 90 93 67 01 80 93 66 01 80 e0 91 e0 0e 94 90 00 ff cf dc 01 de 96 ed 91 fc 91 df 97 dd 96 6c 91 4e 96 09 95 08 95  H..”T.Œå.à.“g.€“f.€à‘à.”..ÿÏÜ.Þ–í‘ü‘ß—Ý–l‘N–....</div>
<div class="M" style="left:3px;top:130.98px;font-size:15px;line-height:15px;color:#000"><span style="color:#8a8a8a">prog 0x0120</span>  fc 01 25 ad e2 0f f1 1d 31 e0 36 8f 32 0f fc 01 e3 0f f1 1d 32 e0 36 8f 32 0f fc 01 e3 0f f1 1d 33 e0 36 8f 32 0f fc 01 e3 0f f1 1d 34 e0 36 8f  ü.%.â.ñ.1à6.2.ü.ã.ñ.2à6.2.ü.ã.ñ.3à6.2.ü.ã.ñ.4à6.</div>
<div class="M" style="left:3px;top:152.16px;font-size:15px;line-height:15px;color:#000"><span style="color:#8a8a8a">prog 0x0150</span>  35 e0 32 0f fc 01 35 af 2c 5f e2 0f f1 1d 25 e0 26 8f 0e 94 86 00 08 95 f8 94 ff cf ff ff ff ff ff ff ff ff ff ff ff ff ff ff ff ff ff ff ff ff  5à2.ü.5¯,_â.ñ.%à&amp;..”....ø”ÿÏÿÿÿÿÿÿÿÿÿÿÿÿÿÿÿÿÿÿÿÿ</div>
<div class="M" style="left:3px;top:173.34px;font-size:15px;line-height:15px;color:#000"><span style="color:#8a8a8a">prog 0x0180</span>  ff ff ff ff ff ff ff ff ff ff ff ff ff ff ff ff ff ff ff ff ff ff ff ff ff ff ff ff ff ff ff ff ff ff ff ff ff ff ff ff ff ff ff ff ff ff ff ff  ÿÿÿÿÿÿÿÿÿÿÿÿÿÿÿÿÿÿÿÿÿÿÿÿÿÿÿÿÿÿÿÿÿÿÿÿÿÿÿÿÿÿÿÿÿÿÿÿ</div>
</div>
<div style="left:8px;top:968px;width:588px;height:25px;background:#4d6082;"></div>
<div style="left:516px;top:969px;width:80px;height:24px;background:#ffffff;"></div>
<div class="S" style="left:14px;top:974.13px;font-size:15.2px;line-height:15.2px;color:#fff;">Call Stack</div>
<div class="S" style="left:90px;top:974.13px;font-size:15.2px;line-height:15.2px;color:#fff;">Breakpoints</div>
<div class="S" style="left:180px;top:974.13px;font-size:15.2px;line-height:15.2px;color:#fff;">Command Window</div>
<div class="S" style="left:320px;top:974.13px;font-size:15.2px;line-height:15.2px;color:#fff;">Immediate Window</div>
<div class="S" style="left:463px;top:974.13px;font-size:15.2px;line-height:15.2px;color:#fff;">Output</div>
<div class="S" style="left:522px;top:973.33px;font-size:15.2px;line-height:15.2px;color:#1e1e1e;">Memory 4</div>
<div class="S" style="left:5px;top:1008.30px;font-size:15px;line-height:15px;color:#ffffff;">Stopped</div>
<div style="left:124px;top:1030px;width:62px;height:8px;background:#3a3c40;"></div>
<div style="left:497px;top:1030px;width:60px;height:8px;background:#3a3c40;"></div>
</body></html>
